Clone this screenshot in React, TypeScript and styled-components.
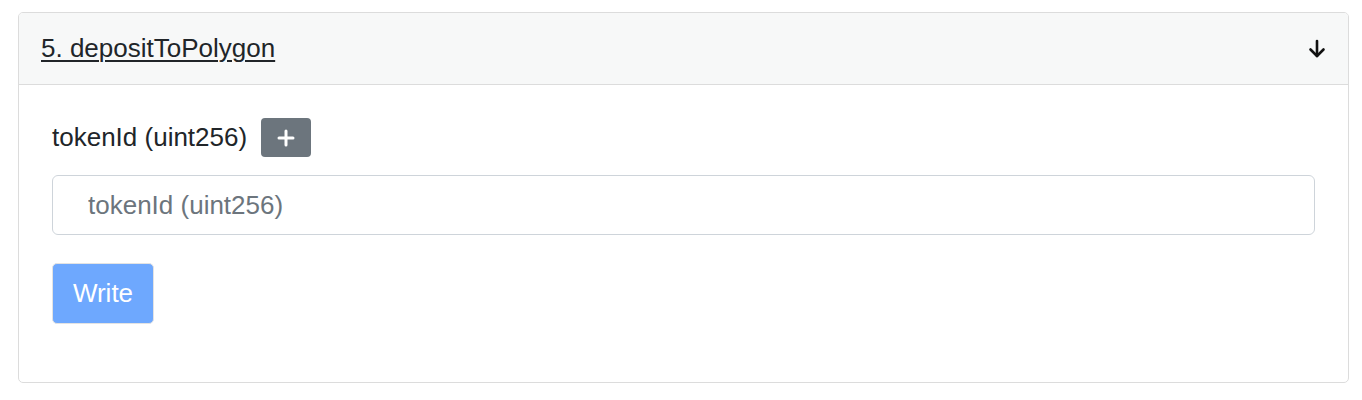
import React from "react";
import styled, { createGlobalStyle } from "styled-components";

const Global = createGlobalStyle`
  html, body { margin: 0; padding: 0; background: #fff; }
  body { font-family: "Liberation Sans", Arial, Helvetica, sans-serif; color: #212529; }
  * { box-sizing: border-box; }
`;

const Page = styled.div`
  padding: 12px 13px 0 18px;
`;

const Card = styled.div`
  border: 1px solid #dcdcdc;
  border-radius: 5px;
  overflow: hidden;
  background: #fff;
`;

const Header = styled.div`
  height: 72px;
  display: flex;
  align-items: center;
  justify-content: space-between;
  padding: 0 22px 0 22px;
  background: #f7f8f8;
  border-bottom: 1px solid #dcdcdc;
`;

const Title = styled.a`
  font-size: 26px;
  color: #212529;
  text-decoration: underline;
  text-decoration-thickness: 2px;
  text-underline-offset: 3px;
  cursor: pointer;
`;

const Body = styled.div`
  padding: 33px 33px 58px 33px;
  display: flex;
  flex-direction: column;
`;

const LabelRow = styled.div`
  display: flex;
  align-items: center;
  gap: 14px;
  height: 39px;
`;

const Label = styled.label`
  font-size: 26px;
  color: #212529;
`;

const IconButton = styled.button`
  width: 50px;
  height: 39px;
  border: none;
  border-radius: 4px;
  background: #6c757d;
  display: flex;
  align-items: center;
  justify-content: center;
  padding: 0;
`;

const Input = styled.input`
  margin-top: 18px;
  height: 60px;
  border: 1px solid #ced4da;
  border-radius: 6px;
  padding: 0 35px;
  font-size: 26px;
  font-family: inherit;
  color: #212529;
  &::placeholder { color: #6c757d; }
`;

const WriteButton = styled.button`
  margin-top: 28px;
  width: 102px;
  height: 61px;
  border: 1px solid #e3e3e3;
  border-radius: 5px;
  background: #6ea8fe;
  color: #fff;
  font-size: 26px;
  font-family: inherit;
  padding: 0;
  align-self: flex-start;
`;

export default function App() {
  return (
    <>
      <Global />
      <Page>
        <Card>
          <Header>
            <Title>5. depositToPolygon</Title>
            <svg width="18" height="20" viewBox="0 0 18 20" fill="none" stroke="#111" strokeWidth="2.6" strokeLinecap="round" strokeLinejoin="round">
              <path d="M9 2v15" />
              <path d="M2.5 10.5 9 17l6.5-6.5" />
            </svg>
          </Header>
          <Body>
            <LabelRow>
              <Label>tokenId (uint256)</Label>
              <IconButton aria-label="add">
                <svg width="18" height="18" viewBox="0 0 18 18" stroke="#fff" strokeWidth="3" strokeLinecap="round">
                  <path d="M9 2v14M2 9h14" />
                </svg>
              </IconButton>
            </LabelRow>
            <Input placeholder="tokenId (uint256)" />
            <WriteButton disabled>Write</WriteButton>
          </Body>
        </Card>
      </Page>
    </>
  );
}
